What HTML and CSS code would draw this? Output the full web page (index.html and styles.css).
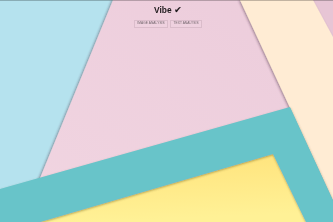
FILE: index.html
```html
<!DOCTYPE html>
<html lang="en">
<head>
    <meta charset="UTF-8">
    <meta name="viewport" content="width=device-width, initial-scale=1.0">
    <title>Vibe</title>
    <link rel="stylesheet" href="styles.css">
</head>
<body>
    <!-- background paper layers -->
    <svg class="backdrop" viewBox="0 0 333 222" preserveAspectRatio="none">
        <defs>
            <filter id="shLeft" x="-20%" y="-20%" width="140%" height="140%">
                <feDropShadow dx="-1.2" dy="0.4" stdDeviation="1.3" flood-color="#3a2030" flood-opacity="0.45"/>
            </filter>
            <filter id="shDown" x="-20%" y="-20%" width="140%" height="140%">
                <feDropShadow dx="0.2" dy="1" stdDeviation="0.9" flood-color="#5a4a10" flood-opacity="0.45"/>
            </filter>
            <linearGradient id="yel" x1="0" y1="0" x2="0.15" y2="1">
                <stop offset="0" stop-color="#ffe27a"/>
                <stop offset="1" stop-color="#fff196"/>
            </linearGradient>
            <linearGradient id="pnk" x1="1" y1="0" x2="0" y2="1">
                <stop offset="0" stop-color="#ecccdb"/>
                <stop offset="1" stop-color="#f1d5e1"/>
            </linearGradient>
        </defs>
        <rect x="0" y="0" width="333" height="222" fill="#b5e2ee"/>
        <polygon points="113,0 333,0 333,222 22,222" fill="url(#pnk)" filter="url(#shLeft)"/>
        <polygon points="300,0 333,0 333,60" fill="#e7c5d5"/>
        <polygon points="240,0 313,0 433,222 343,222" fill="#ffecd4" filter="url(#shLeft)"/>
        <polygon points="273,154 306,222 40,222" fill="url(#yel)"/>
        <polygon points="0,189 290,107 343,222 306,222 273,154 40,222 0,222" fill="#67c4c9" filter="url(#shDown)"/>
        <rect x="0" y="0" width="333" height="0.8" fill="rgba(0,0,0,0.3)"/>
    </svg>

    <header class="top">
        <h1 class="brand">Vibe <span class="tick">✔</span></h1>
        <nav class="tabs">
            <button class="tab">Image Analysis</button>
            <button class="tab">Text Analysis</button>
        </nav>
    </header>
</body>
</html>
```

FILE: styles.css
```css
body{
    margin: 0;
    font-family: "Liberation Sans", Arial, sans-serif;
    color: #222;
}
.backdrop{
    position: fixed;
    left: 0;top: 0;
    width: 100%;height: 100%;
    z-index: -1;
    display: block;
}
.top{
    display: flex;
    flex-direction: column;
    align-items: center;
    padding-top: 5px;
    padding-left: 3px;
}
.brand{
    margin: 0;
    font-size: 8.4px;
    line-height: 10px;
    font-weight: bold;
    color: #1e1a1c;
}
.tick{
    font-family: "DejaVu Sans", sans-serif;
    font-size: 9.5px;
}
.tabs{
    display: flex;
    gap: 1.5px;
    margin-top: 5px;
}
.tab{
    height: 8px;
    padding: 0 2.6px;
    margin: 0;
    border: 0.6px solid rgba(120,80,100,0.16);
    background: rgba(255,255,255,0.06);
    font-family: "Liberation Sans", Arial, sans-serif;
    font-size: 3.2px;
    letter-spacing: 0.08px;
    text-transform: uppercase;
    color: #6b5f66;
    line-height: 1;
}
```
